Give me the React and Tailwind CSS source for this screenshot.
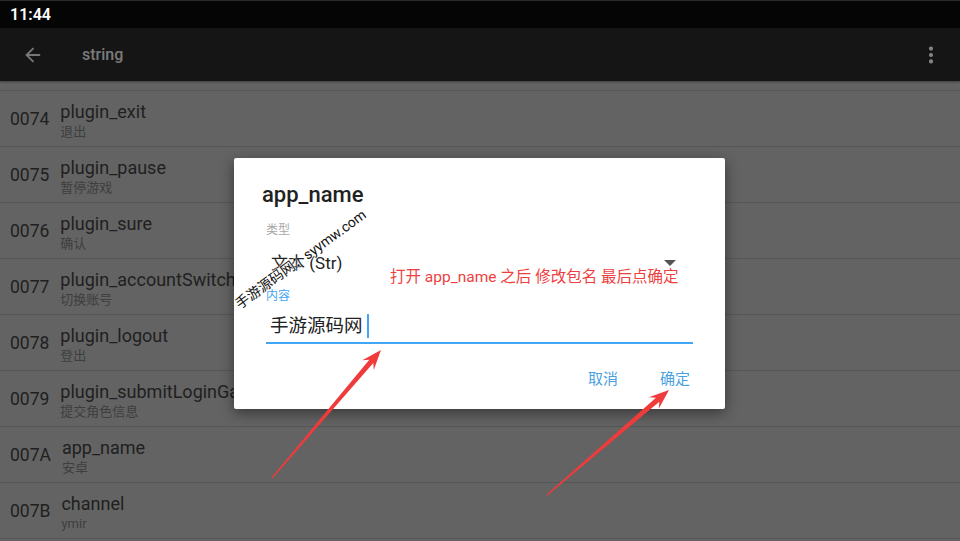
import React from "react";
import { ArrowLeft, MoreVertical } from "lucide-react";

const rows = [
  { id: "0074", key: "plugin_exit", val: "退出" },
  { id: "0075", key: "plugin_pause", val: "暂停游戏" },
  { id: "0076", key: "plugin_sure", val: "确认" },
  { id: "0077", key: "plugin_accountSwitch", val: "切换账号" },
  { id: "0078", key: "plugin_logout", val: "登出" },
  { id: "0079", key: "plugin_submitLoginGameRole", val: "提交角色信息" },
  { id: "007A", key: "app_name", val: "安卓" },
  { id: "007B", key: "channel", val: "ymir" },
];

const font = { fontFamily: "Roboto, 'Noto Sans CJK SC', sans-serif" };

// Red hand-drawn style pointer: thin tail widening toward a barbed head
function Pointer({ x1, y1, x2, y2 }) {
  const dx = x2 - x1;
  const dy = y2 - y1;
  const L = Math.sqrt(dx * dx + dy * dy);
  const a = (Math.atan2(dy, dx) * 180) / Math.PI;
  const pts = [
    [0, 0.6],
    [L - 15, 2.6],
    [L - 20, 7.5],
    [L, 0],
    [L - 20, -7.5],
    [L - 15, -2.6],
    [0, -0.6],
  ]
    .map((p) => p.join(","))
    .join(" ");
  return (
    <polygon
      points={pts}
      fill="#ef3b3b"
      transform={`translate(${x1} ${y1}) rotate(${a})`}
    />
  );
}

export default function App() {
  return (
    <div
      className="relative w-[960px] h-[541px] overflow-hidden bg-[#636363]"
      style={font}
    >
      {/* status bar */}
      <div className="h-[28px] bg-[#050505] flex items-center pl-[10px] border-t border-[#2a2a2a]">
        <span className="text-white text-[16px] font-semibold leading-none">11:44</span>
      </div>

      {/* toolbar */}
      <div className="h-[53px] bg-[#151515] flex items-center shadow-[0_1px_2px_rgba(0,0,0,0.4)] relative">
        <ArrowLeft className="ml-[22px] text-[#777]" size={22} strokeWidth={2} />
        <span className="ml-[38px] text-[16px] font-medium text-[#7b7b7b]">string</span>
        <MoreVertical className="ml-auto mr-[18px] text-[#888]" size={22} strokeWidth={2.5} />
      </div>

      {/* string list */}
      <div className="flex flex-col">
        <div className="h-[10px] border-b border-[#575757]" />
        {rows.map((r) => (
          <div
            key={r.id}
            className="h-[56px] border-b border-[#565656] flex items-center pl-[10px] gap-[11px] overflow-hidden"
          >
            <span className="pt-[3px] text-[17.5px] text-[#1f1f1f] leading-none">{r.id}</span>
            <div className="flex flex-col self-start pt-[10px] whitespace-nowrap">
              <span className="text-[18px] leading-[21px] text-[#1f1f1f]">{r.key}</span>
              <span className="mt-[1px] text-[13px] leading-[17px] text-[#3e3e3e]">{r.val}</span>
            </div>
          </div>
        ))}
      </div>

      {/* edit dialog */}
      <div className="absolute left-[234px] top-[158px] w-[491px] h-[251px] bg-white shadow-[0_4px_14px_rgba(0,0,0,0.45)] rounded-[2px] pl-[32px] pr-[32px] pt-[23px] flex flex-col">
        <div className="ml-[-4px] text-[22px] leading-[28px] font-medium text-[#212121]">app_name</div>
        <div className="mt-[13px] text-[12px] leading-[16px] text-[#a8a8a8]">类型</div>
        <div className="mt-[13px] h-[24px] flex items-center">
          <span className="pl-[5px] text-[17px] leading-[24px] text-[#222]">文本 (Str)</span>
          <span className="ml-auto mr-[17px] w-0 h-0 border-l-[6px] border-r-[6px] border-t-[6px] border-l-transparent border-r-transparent border-t-[#555]" />
        </div>
        <div className="mt-[13px] text-[12px] leading-[16px] text-[#42a5f5]">内容</div>
        <div className="mt-[10px] pb-[4px] border-b-2 border-[#42a5f5] flex items-center">
          <span className="pl-[4px] text-[18.5px] leading-[24px] text-[#222]">手游源码网</span>
          <span className="ml-[4px] w-[2px] h-[24px] bg-[#42a5f5]" />
        </div>
        <div className="mt-[25px] flex justify-end gap-[42px] pr-[3px]">
          <span className="text-[15px] leading-[20px] text-[#4a9fe0]">取消</span>
          <span className="text-[15px] leading-[20px] text-[#4a9fe0]">确定</span>
        </div>
      </div>

      {/* annotation */}
      <div className="absolute left-[390px] top-[266px] text-[15.5px] leading-[22px] text-[#ee3f3f] whitespace-nowrap">
        打开 app_name 之后 修改包名 最后点确定
      </div>

      {/* watermark */}
      <div className="absolute left-[232px] top-[299px] origin-top-left -rotate-[36deg] text-[14px] leading-[16px] text-[#111] whitespace-nowrap [text-shadow:0_0_2px_#fff,0_0_2px_#fff,0_0_3px_#fff]">
        手游源码网：syymw.com
      </div>

      {/* pointers */}
      <svg className="absolute left-0 top-0" width="960" height="541">
        <Pointer x1={272} y1={478} x2={381} y2={350} />
        <Pointer x1={547} y1={495} x2={669} y2={390} />
      </svg>
    </div>
  );
}
